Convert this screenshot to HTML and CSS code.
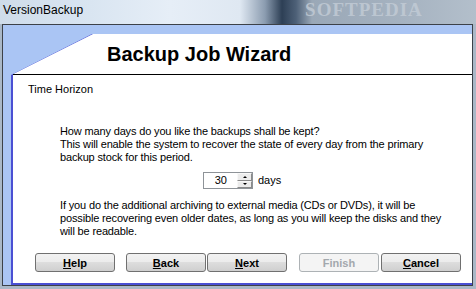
FILE: index.html
```html
<!DOCTYPE html>
<html>
<head>
  <meta charset="utf-8">
  <title>VersionBackup</title>
  <link rel="stylesheet" href="styles.css">
</head>
<body>
  <div class="titlebar">
    <span class="app-name">VersionBackup</span>
    <span class="watermark">SOFTPEDIA</span>
  </div>

  <div class="frame">
    <div class="sheet">
      <div class="paper">
        <div class="header">
          <h1>Backup Job Wizard</h1>
        </div>

        <div class="step">Time Horizon</div>

        <p class="text first">
          How many days do you like the backups shall be kept?<br>
          This will enable the system to recover the state of every day from the primary<br>
          backup stock for this period.
        </p>

        <div class="days-row">
          <div class="spin">
            <span class="spin-value">30</span>
            <span class="spin-btns">
              <span class="spin-btn up"></span>
              <span class="spin-btn down"></span>
            </span>
          </div>
          <span class="days-label">days</span>
        </div>

        <p class="text second">
          If you do the additional archiving to external media (CDs or DVDs), it will be<br>
          possible recovering even older dates, as long as you will keep the disks and they<br>
          will be readable.
        </p>

        <div class="buttons">
          <button class="btn help"><u>H</u>elp</button>
          <button class="btn back"><u>B</u>ack</button>
          <button class="btn next"><u>N</u>ext</button>
          <button class="btn finish" disabled>Finish</button>
          <button class="btn cancel"><u>C</u>ancel</button>
        </div>
      </div>
    </div>
  </div>
</body>
</html>
```

FILE: styles.css
```css
html, body {
  margin: 0;
  padding: 0;
}

body {
  width: 476px;
  height: 289px;
  overflow: hidden;
  background: #aab8c7;
  font-family: "Liberation Sans", Arial, sans-serif;
}

.titlebar {
  height: 24px;
  display: flex;
  align-items: flex-start;
  background: linear-gradient(90deg, #cfdcea 0px, #d9e5f1 90px, #e6eef7 170px, #dfe8f2 240px, #8b9cb0 265px, #2d3f55 282px, #4d6077 296px, #9aa8b7 312px, #a5b2c0 400px, #b3bfcb 476px);
  overflow: hidden;
}

.app-name {
  font-size: 12px;
  line-height: 14px;
  padding: 3px 0 0 3px;
  color: #000;
}

.watermark {
  margin-left: 222px;
  font-family: "Liberation Serif", serif;
  font-weight: bold;
  font-size: 19px;
  line-height: 20px;
  letter-spacing: 1px;
  color: #c3ccd6;
  opacity: 0.8;
}

.frame {
  margin-left: 2px;
  width: 469px;
  height: 260px;
  border: 1px solid #3c4148;
  background: #aac5f4;
}

.sheet {
  margin: 9px 0 0 8px;
  height: 251px;
  background: #4a4fd3;
  clip-path: polygon(81px 0, 100% 0, 100% 100%, 0 100%, 0 41px);
}

.paper {
  margin: 2px 0 0 2px;
  height: 249px;
  background: #fff;
  clip-path: polygon(80px 0, 100% 0, 100% 100%, 0 100%, 0 40px);
  font-size: 11px;
  line-height: 13px;
  color: #000;
}

.header {
  height: 40px;
  border-bottom: 1px solid #000;
}

.header h1 {
  margin: 0;
  padding-left: 94px;
  font-size: 20px;
  line-height: 40px;
  font-weight: bold;
}

.step {
  margin: 8px 0 0 15px;
}

.text {
  margin: 0 0 0 47px;
  letter-spacing: -0.15px;
}

.text.first {
  margin-top: 29px;
}

.text.second {
  margin-top: 10px;
}

.days-row {
  display: flex;
  align-items: center;
  gap: 5px;
  margin: 8px 0 0 190px;
}

.spin {
  display: flex;
  width: 48px;
  height: 15px;
  border: 1px solid #8e9398;
  background: #fff;
}

.spin-value {
  flex: 1;
  text-align: right;
  padding-right: 10px;
  line-height: 15px;
}

.spin-btns {
  display: flex;
  flex-direction: column;
  width: 15px;
}

.spin-btn {
  flex: 1;
  display: flex;
  align-items: center;
  justify-content: center;
  background: #ececec;
  border: 1px solid #b4b4b4;
  border-color: #f8f8f8 #8a8a8a #8a8a8a #f8f8f8;
}

.spin-btn.up::before {
  content: "";
  border: 2px solid transparent;
  border-top: 0;
  border-bottom: 2px solid #000;
}

.spin-btn.down::before {
  content: "";
  border: 2px solid transparent;
  border-bottom: 0;
  border-top: 2px solid #000;
}

.buttons {
  display: flex;
  margin: 15px 0 0 22px;
}

.btn {
  width: 80px;
  height: 19px;
  padding: 0;
  border: 1px solid #707070;
  border-radius: 3px;
  background: linear-gradient(#f2f2f2 0%, #ebebeb 50%, #dddddd 50%, #cfcfcf 100%);
  font-family: "Liberation Sans", Arial, sans-serif;
  font-weight: bold;
  font-size: 11px;
  color: #000;
}

.btn u {
  text-decoration: underline;
}

.btn.back {
  margin-left: 11px;
}

.btn.next {
  margin-left: 1px;
}

.btn.finish {
  margin-left: 12px;
  border-color: #adb2b5;
  background: #f4f4f4;
  color: #a3a8ad;
}

.btn.cancel {
  margin-left: 2px;
}
```
